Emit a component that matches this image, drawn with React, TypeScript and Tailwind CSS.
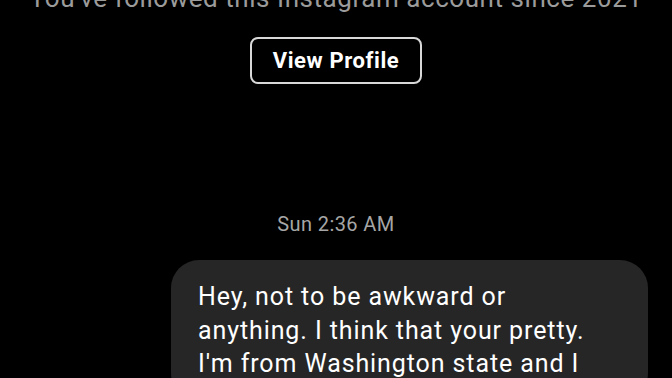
export default function App() {
  return (
    <div
      className="w-[672px] h-[378px] bg-black overflow-hidden flex flex-col items-center"
      style={{ fontFamily: "Roboto, 'Noto Sans', sans-serif" }}
    >
      <div className="shrink-0 mt-[-17px] text-[26px] leading-[30px] tracking-[0.55px] text-[#9b9b9b] whitespace-nowrap">
        You've followed this Instagram account since 2021
      </div>
      <div className="shrink-0 mt-[24px] w-[172px] h-[47px] rounded-[8px] border-2 border-[#d8d8d8] flex items-center justify-center text-white font-bold text-[22px] tracking-[0.6px]">
        View Profile
      </div>
      <div className="shrink-0 mt-[128px] text-[20px] leading-[24px] tracking-[0.4px] text-[#a6a6a6]">Sun 2:36 AM</div>
      <div className="shrink-0 self-stretch flex justify-end pr-[24px] mt-[24px]">
        <div className="w-[477px] bg-[#262626] rounded-[28px] pl-[27px] pr-[30px] pt-[20px] pb-[20px] text-[25px] leading-[33.5px] tracking-[0.9px] text-white">
          Hey, not to be awkward or anything. I think that your pretty. I'm from Washington state and I
        </div>
      </div>
    </div>
  );
}
